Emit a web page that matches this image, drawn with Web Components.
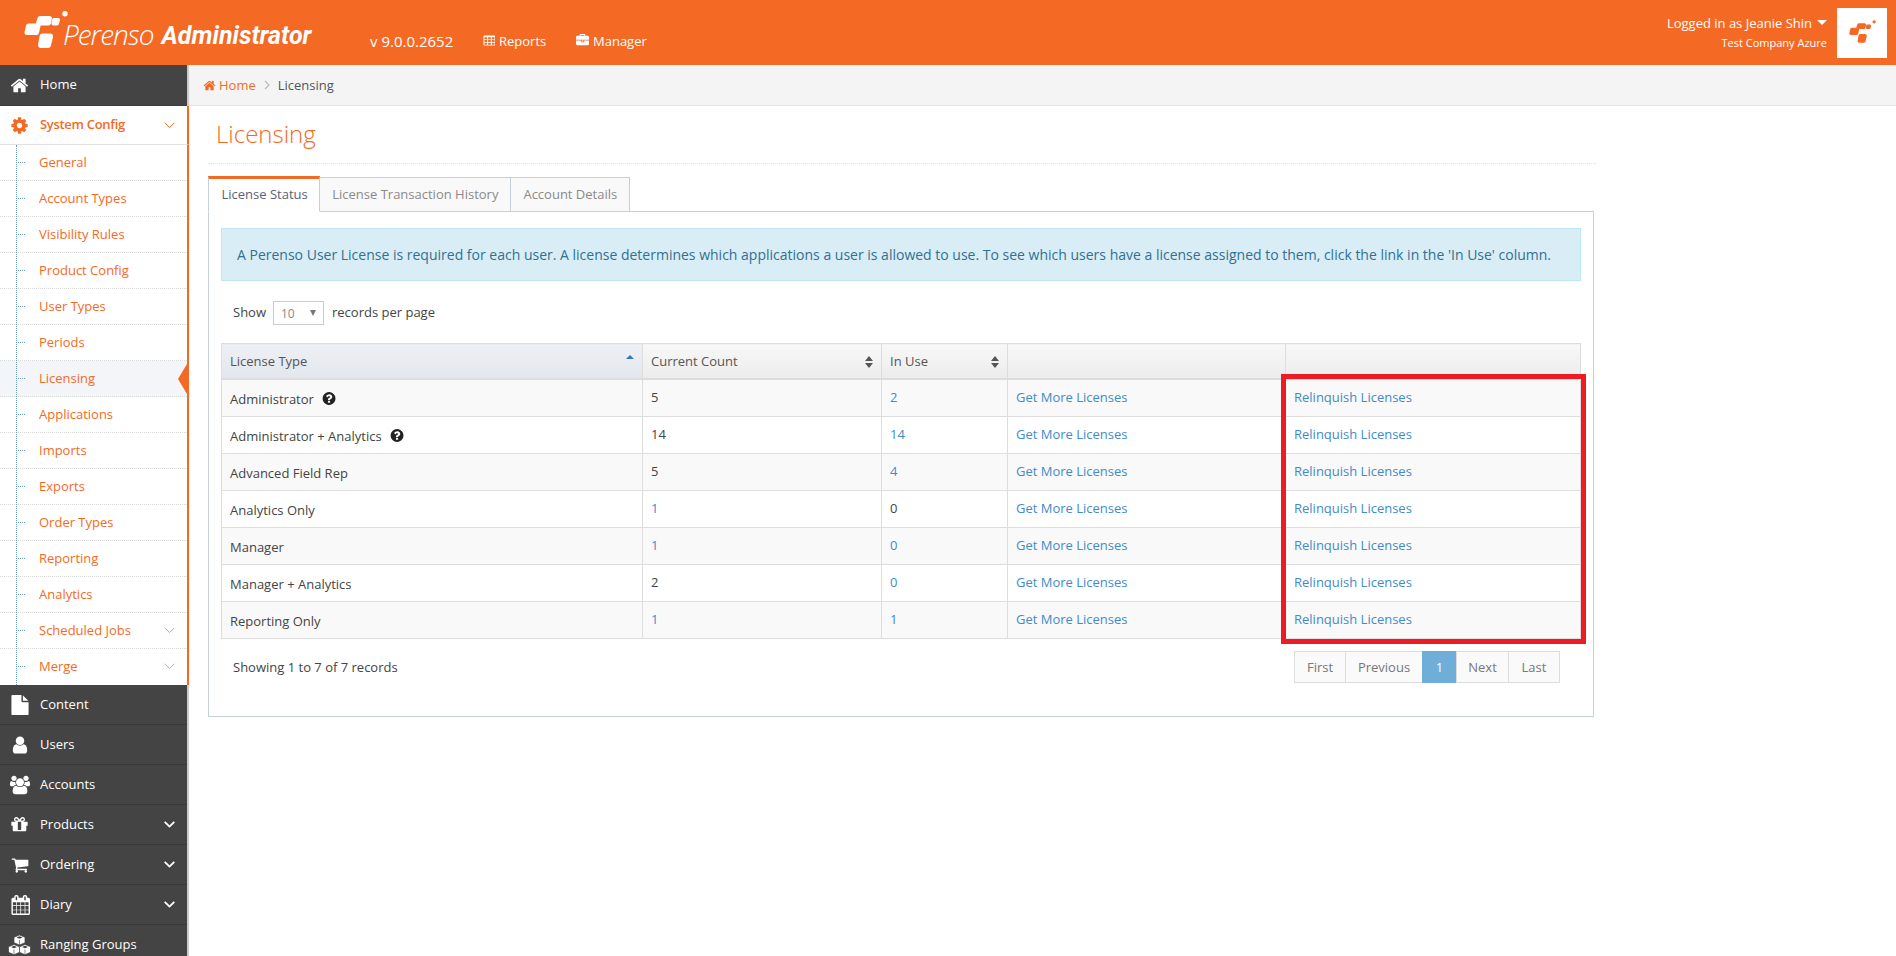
<!DOCTYPE html>
<html>
<head>
<meta charset="utf-8">
<title>Licensing</title>
<style>
  html, body { margin: 0; height: 956px; overflow: hidden; background: #fff; }
  body { font-family: "Open Sans", "Liberation Sans", sans-serif; font-size: 13px; color: #393939; }
</style>
</head>
<body>
<perenso-app>
  <app-header slot="header"></app-header>
  <side-nav slot="nav"></side-nav>
  <bread-crumbs slot="crumbs"></bread-crumbs>
  <license-page slot="page"></license-page>
</perenso-app>

<script>
const ICONS = {
  home: ["0 0 1792 1792", "M1472 992v480q0 26-19 45t-45 19h-384v-384h-256v384h-384q-26 0-45-19t-19-45v-480q0-1 .5-3t.5-3l575-474 575 474q1 2 1 6zm223-69l-62 74q-8 9-21 11h-3q-13 0-21-7l-692-577-692 577q-12 8-24 7-13-2-21-11l-62-74q-8-10-7-23.500t11-21.500l719-599q32-26 76-26t76 26l244 204v-195q0-14 9-23t23-9h192q14 0 23 9t9 23v408l219 182q10 8 11 21.500t-7 23.500z"],
  cog: ["0 0 1792 1792", "M1152 896q0-106-75-181t-181-75-181 75-75 181 75 181 181 75 181-75 75-181zm512-109v222q0 12-8 23t-20 13l-185 28q-19 54-39 91 35 50 107 138 10 12 10 25t-9 23q-27 37-99 108t-94 71q-12 0-26-9l-138-108q-44 23-91 38-16 136-29 186-7 28-36 28h-222q-14 0-24.500-8.500t-11.500-21.500l-28-184q-49-16-90-37l-141 107q-10 9-25 9-14 0-25-11-126-114-165-168-7-10-7-23 0-12 8-23 15-21 51-66.500t54-70.500q-27-50-41-99l-183-27q-13-2-21-12.500t-8-23.500v-222q0-12 8-23t19-13l186-28q14-46 39-92-40-57-107-138-10-12-10-24 0-10 9-23 26-36 98.500-107.500t94.500-71.500q13 0 26 10l138 107q44-23 91-38 16-136 29-186 7-28 36-28h222q14 0 24.500 8.500t11.500 21.500l28 184q49 16 90 37l142-107q9-9 24-9 13 0 25 10 129 119 165 170 7 8 7 22 0 12-8 23-15 21-51 66.500t-54 70.500q26 50 41 98l183 28q13 2 21 12.500t8 23.500z"],
  file: ["0 0 1792 1792", "M1152 512v-472q22 14 36 28l408 408q14 14 28 36h-472zm-128 32q0 40 28 68t68 28h544v1056q0 40-28 68t-68 28h-1344q-40 0-68-28t-28-68v-1600q0-40 28-68t68-28h800v544z"],
  user: ["0 0 1792 1792", "M1536 1399q0 109-62.500 187t-150.500 78h-854q-88 0-150.500-78t-62.500-187q0-85 8.500-160.500t31.500-152 58.500-131 94-89 134.500-34.500q131 128 313 128t313-128q76 0 134.500 34.500t94 89 58.500 131 31.500 152 8.500 160.500zm-256-887q0 159-112.500 271.500t-271.500 112.500-271.500-112.500-112.500-271.500 112.500-271.500 271.500-112.500 271.500 112.500 112.500 271.500z"],
  users: ["0 0 1920 1792", "M593 896q-162 5-265 128h-134q-82 0-138-40.500t-56-118.500q0-353 124-353 6 0 43.500 21t97.500 42.500 119 21.500q67 0 133-23-5 37-5 66 0 139 81 256zm1071 637q0 120-73 189.500t-194 69.500h-874q-121 0-194-69.500t-73-189.500q0-53 3.500-103.500t14-109 26.500-108.500 43-97.500 62-81 85.500-53.500 111.500-20q10 0 43 21.500t73 48 107 48 135 21.500 135-21.500 107-48 73-48 43-21.500q61 0 111.500 20t85.500 53.500 62 81 43 97.500 26.500 108.500 14 109 3.500 103.500zm-1024-1277q0 106-75 181t-181 75-181-75-75-181 75-181 181-75 181 75 75 181zm704 384q0 159-112.500 271.500t-271.500 112.500-271.500-112.500-112.500-271.500 112.500-271.500 271.500-112.500 271.500 112.500 112.500 271.500zm576 225q0 78-56 118.500t-138 40.500h-134q-103-123-265-128 81-117 81-256 0-29-5-66 66 23 133 23 59 0 119-21.500t97.500-42.500 43.500-21q124 0 124 353zm-128-609q0 106-75 181t-181 75-181-75-75-181 75-181 181-75 181 75 75 181z"],
  gift: ["0 0 1792 1792", "M1056 1356v-716h-320v716q0 25 18 38.500t46 13.500h192q28 0 46-13.500t18-38.500zm-456-844h195l-126-161q-26-31-69-31-40 0-68 28t-28 68 28 68 68 28zm688-96q0-40-28-68t-68-28q-43 0-69 31l-125 161h194q40 0 68-28t28-68zm376 256v320q0 14-9 23t-23 9h-96v416q0 40-28 68t-68 28h-1088q-40 0-68-28t-28-68v-416h-96q-14 0-23-9t-9-23v-320q0-14 9-23t23-9h440q-93 0-158.500-65.500t-65.500-158.500 65.500-158.500 158.500-65.500q107 0 168 77l128 165 128-165q61-77 168-77 93 0 158.500 65.500t65.500 158.500-65.500 158.500-158.500 65.500h440q14 0 23 9t9 23z"],
  cart: ["0 0 1792 1792", "M704 1536q0 52-38 90t-90 38-90-38-38-90 38-90 90-38 90 38 38 90zm896 0q0 52-38 90t-90 38-90-38-38-90 38-90 90-38 90 38 38 90zm128-1088v512q0 24-16.500 42.500t-40.500 21.500l-1044 122q13 60 13 70 0 16-24 64h920q26 0 45 19t19 45-19 45-45 19h-1024q-26 0-45-19t-19-45q0-11 8-31.500t16-36 21.500-40 15.500-29.500l-177-823h-204q-26 0-45-19t-19-45 19-45 45-19h256q16 0 28.500 6.500t19.500 15.500 13 24.500 8 26 5.500 29.500 4.500 26h1201q26 0 45 19t19 45z"],
  calendar: ["0 0 1664 1792", "M192 1664h288v-288h-288v288zm352 0h320v-288h-320v288zm-352-352h288v-320h-288v320zm352 0h320v-320h-320v320zm-352-384h288v-288h-288v288zm736 736h320v-288h-320v288zm-384-736h320v-288h-320v288zm768 736h288v-288h-288v288zm-384-352h320v-320h-320v320zm-352-864v-288q0-13-9.500-22.500t-22.500-9.500h-64q-13 0-22.500 9.500t-9.500 22.500v288q0 13 9.500 22.500t22.500 9.500h64q13 0 22.500-9.500t9.500-22.500zm736 864h288v-320h-288v320zm-384-384h320v-288h-320v288zm384 0h288v-288h-288v288zm32-480v-288q0-13-9.500-22.500t-22.500-9.500h-64q-13 0-22.500 9.500t-9.500 22.500v288q0 13 9.500 22.500t22.500 9.500h64q13 0 22.500-9.500t9.500-22.500zm384-64v1280q0 52-38 90t-90 38h-1408q-52 0-90-38t-38-90v-1280q0-52 38-90t90-38h128v-96q0-66 47-113t113-47h64q66 0 113 47t47 113v96h384v-96q0-66 47-113t113-47h64q66 0 113 47t47 113v96h128q52 0 90 38t38 90z"],
  table: ["0 128 1664 1536", "M576 1376v-192q0-14-9-23t-23-9h-320q-14 0-23 9t-9 23v192q0 14 9 23t23 9h320q14 0 23-9t9-23zm0-384v-192q0-14-9-23t-23-9h-320q-14 0-23 9t-9 23v192q0 14 9 23t23 9h320q14 0 23-9t9-23zm512 384v-192q0-14-9-23t-23-9h-320q-14 0-23 9t-9 23v192q0 14 9 23t23 9h320q14 0 23-9t9-23zm-512-768v-192q0-14-9-23t-23-9h-320q-14 0-23 9t-9 23v192q0 14 9 23t23 9h320q14 0 23-9t9-23zm512 384v-192q0-14-9-23t-23-9h-320q-14 0-23 9t-9 23v192q0 14 9 23t23 9h320q14 0 23-9t9-23zm512 384v-192q0-14-9-23t-23-9h-320q-14 0-23 9t-9 23v192q0 14 9 23t23 9h320q14 0 23-9t9-23zm-512-768v-192q0-14-9-23t-23-9h-320q-14 0-23 9t-9 23v192q0 14 9 23t23 9h320q14 0 23-9t9-23zm512 384v-192q0-14-9-23t-23-9h-320q-14 0-23 9t-9 23v192q0 14 9 23t23 9h320q14 0 23-9t9-23zm0-384v-192q0-14-9-23t-23-9h-320q-14 0-23 9t-9 23v192q0 14 9 23t23 9h320q14 0 23-9t9-23zm128-320v1088q0 66-47 113t-113 47h-1344q-66 0-113-47t-47-113v-1088q0-66 47-113t113-47h1344q66 0 113 47t47 113z"],
  briefcase: ["0 0 1792 1792", "M640 256h512v-128h-512v128zm1152 640v480q0 66-47 113t-113 47h-1472q-66 0-113-47t-47-113v-480h672v160q0 26 19 45t45 19h320q26 0 45-19t19-45v-160h672zm-768 0v128h-256v-128h256zm768-480v384h-1792v-384q0-66 47-113t113-47h352v-160q0-40 28-68t68-28h576q40 0 68 28t28 68v160h352q66 0 113 47t47 113z"],
  help: ["0 0 1664 1792", "M1024 1376v-192q0-14-9-23t-23-9h-192q-14 0-23 9t-9 23v192q0 14 9 23t23 9h192q14 0 23-9t9-23zm256-672q0-88-55.500-163t-138.500-116-170-41q-243 0-371 213-15 24 8 42l132 100q7 6 19 6 16 0 25-12 53-68 86-92 34-24 86-24 48 0 85.500 26t37.500 59q0 38-20 61t-68 45q-63 28-115.500 86.500t-52.500 125.500v36q0 14 9 23t23 9h192q14 0 23-9t9-23q0-19 21.500-49.500t54.500-49.500q32-18 49-28.500t46-35 44.500-48 28-60.500 12.500-81zm384 192q0 209-103 385.500t-279.500 279.500-385.500 103-385.500-103-279.500-279.500-103-385.500 103-385.500 279.500-279.500 385.500-103 385.500 103 279.500 279.500 103 385.500z"]
};

function icon(name, size) {
  const [box, d] = ICONS[name];
  return `<svg viewBox="${box}" width="${size}" height="${size}" fill="currentColor" aria-hidden="true"><path d="${d}"/></svg>`;
}

// three stacked cubes, drawn by hand: white sides, dark seams
const cubes = `<svg viewBox="0 0 23 20" width="23" height="20" aria-hidden="true">
  <g fill="#fff" stroke="#444" stroke-width=".7" stroke-linejoin="round">
    <path d="M11.500 0l5.500 2.300v5.400l-5.500 2.400L6 7.700V2.300z"/>
    <path d="M6 9.500l5.500 2.300v5.500L6 19.700.5 17.300v-5.500z"/>
    <path d="M17 9.500l5.500 2.300v5.500L17 19.700l-5.500-2.400v-5.500z"/>
  </g>
  <g fill="#444">
    <path d="M11.500 1.300l3 1.200-3 1.300-3-1.300zM6 10.800l3 1.200-3 1.300L3 12zM17 10.800l3 1.200-3 1.300-3-1.300z"/>
    <path d="M11.200 5h.6v5h-.6zM5.700 14.500h.6v5h-.6zM16.700 14.500h.6v5h-.6z"/>
  </g>
</svg>`;

function chevron(weight) {
  return `<svg viewBox="0 0 11 7" width="11" height="7" fill="none" stroke="currentColor" stroke-width="${weight}"><path d="M.7 .8l4.800 4.800 4.800-4.800"/></svg>`;
}

// the Perenso mark: joined blobs, a small blob and a dot
function logoMark(w, h, color) {
  return `<svg viewBox="0 0 44 37" width="${w}" height="${h}" aria-hidden="true">
    <g fill="${color}" stroke="${color}" stroke-linejoin="round">
      <polygon stroke-width="5" points="16,7.500 25.500,7.500 24.500,12 14.500,12"/>
      <polygon stroke-width="5" points="4.500,15 14,15 12.500,21.500 3,21.500"/>
      <polygon stroke-width="6" points="18.500,25.500 26,25.500 24,34 17,34"/>
      <polygon stroke-width="4" points="30,9 34,9 33,12.500 29.500,12.500"/>
    </g>
    <circle cx="41" cy="2.700" r="2.700" fill="${color}"/>
  </svg>`;
}

class PerensoApp extends HTMLElement {
  constructor() {
    super();
    this.attachShadow({ mode: "open" }).innerHTML = `
      <style>
        :host { display: grid; grid-template: 65px 1fr / 189px 1fr; height: 956px; overflow: hidden; }
        .top { grid-column: 1 / 3; }
        .side { overflow: hidden; }
        main { min-width: 0; }
      </style>
      <div class="top"><slot name="header"></slot></div>
      <div class="side"><slot name="nav"></slot></div>
      <main><slot name="crumbs"></slot><slot name="page"></slot></main>
    `;
  }
}

class AppHeader extends HTMLElement {
  connectedCallback() {
    this.attachShadow({ mode: "open" }).innerHTML = `
      <style>
        :host { display: flex; align-items: center; height: 65px; background: #f46a25; color: #fff; }
        .brand { display: flex; align-items: center; margin-left: 24px; width: 346px; height: 65px; }
        .brand svg { margin-right: -5px; margin-top: -6px; flex: none; }
        .word { font-size: 28px; font-weight: 300; font-style: italic; letter-spacing: -1px; margin-top: 3px; }
        .admin { font-family: "Liberation Sans Narrow", "Roboto", sans-serif; font-size: 25px; font-weight: 700; font-style: italic; margin-left: 8px; margin-top: 5px; }
        .ver { font-size: 15px; width: 113px; margin-top: 16px; }
        a { display: flex; align-items: center; gap: 4px; font-size: 13px; margin-top: 16px; }
        .reports { width: 93px; }
        .user { margin-left: auto; text-align: right; margin-right: 10px; }
        .name { font-size: 13px; line-height: 18px; display: flex; align-items: center; justify-content: flex-end; gap: 5px; margin-top: -1px; }
        .caret { width: 0; height: 0; border: 5px solid transparent; border-top: 5px solid #fff; border-bottom: 0; }
        .co { font-size: 11px; font-weight: 500; line-height: 16px; margin-top: 3px; }
        .box { width: 50px; height: 50px; background: #fff; margin-right: 9px; display: flex; align-items: center; justify-content: center; }
        .box svg { margin-top: -3px; }
      </style>
      <div class="brand">${logoMark(44, 37, "#fff")}<span class="word">Perenso</span><span class="admin">Administrator</span></div>
      <span class="ver">v 9.0.0.2652</span>
      <a class="reports">${icon("table", 12)}Reports</a>
      <a>${icon("briefcase", 13)}Manager</a>
      <div class="user">
        <div class="name">Logged in as Jeanie Shin <span class="caret"></span></div>
        <div class="co">Test Company Azure</div>
      </div>
      <div class="box">${logoMark(27, 23, "#f46a25")}</div>
    `;
  }
}

class NavItem extends HTMLElement {
  connectedCallback() {
    const ic = this.getAttribute("icon");
    const size = +this.getAttribute("size") || 20;
    this.attachShadow({ mode: "open" }).innerHTML = `
      <style>
        :host { display: flex; align-items: center; height: 39px; padding-right: 12px; background: #444; color: #fff; border-bottom: 1px solid #3a3a3a; font-size: 13px; }
        :host([open]) { background: #fff; color: #f46a25; font-weight: 600; letter-spacing: -.3px; border-bottom: 1px solid #e1e1e1; }
        .ic { width: 40px; flex: none; display: flex; justify-content: center; padding-right: 1px; box-sizing: border-box; }
        .tx { flex: 1; margin-bottom: 2px; }
        svg { display: block; }
      </style>
      <span class="ic">${ic === "cubes" ? cubes : icon(ic, size)}</span>
      <span class="tx"><slot></slot></span>
      ${this.hasAttribute("more") ? chevron(this.hasAttribute("open") ? 1 : 1.8) : ""}
    `;
  }
}

class NavSub extends HTMLElement {
  connectedCallback() {
    this.attachShadow({ mode: "open" }).innerHTML = `
      <style>
        :host { display: flex; align-items: center; height: 35px; padding-right: 12px; position: relative; background: #fff; color: #f46a25; font-size: 13px; border-bottom: 1px dotted #d8d8d8; }
        :host([current]) { background: #f3f5f9; }
        :host(:last-of-type) { border-bottom: 1px solid #fff; }
        .tick { width: 7px; margin-left: 18px; margin-right: 14px; border-top: 1px dotted #6d9cc5; flex: none; }
        .tx { flex: 1; margin-bottom: 2px; }
        .arrow { display: none; position: absolute; right: 0; top: 3px; width: 0; height: 0; border: 15px solid transparent; border-right: 9px solid #f46a25; border-left: 0; }
        :host([current]) .arrow { display: block; }
        svg { color: #f7956a; }
      </style>
      <span class="tick"></span>
      <span class="tx"><slot></slot></span>
      ${this.hasAttribute("more") ? chevron(1) : ""}
      <span class="arrow"></span>
    `;
  }
}

class SideNav extends HTMLElement {
  connectedCallback() {
    const subs = ["General", "Account Types", "Visibility Rules", "Product Config", "User Types", "Periods", "Licensing", "Applications", "Imports", "Exports", "Order Types", "Reporting", "Analytics", "Scheduled Jobs", "Merge"];
    this.attachShadow({ mode: "open" }).innerHTML = `
      <style>
        :host { display: block; background: #444; border-right: 2px solid #ccc; width: 187px; height: 891px; }
        .tree { position: relative; border-right: 2px solid #f46a25; margin-right: -2px; }
        .tree::before { content: ""; position: absolute; left: 16px; top: 0; bottom: 0; border-left: 1px dotted #6d9cc5; z-index: 1; }
      </style>
      <nav-item icon="home" size="19" style="height:40px">Home</nav-item>
      <nav-item icon="cog" size="19" open more style="height:38px; border-right:2px solid #f46a25; margin-right:-2px">System Config</nav-item>
      <div class="tree">
        ${subs.map(s => `<nav-sub${s === "Licensing" ? " current" : ""}${s === "Scheduled Jobs" || s === "Merge" ? " more" : ""}>${s}</nav-sub>`).join("")}
      </div>
      <nav-item icon="file" size="20">Content</nav-item>
      <nav-item icon="user" size="20">Users</nav-item>
      <nav-item icon="users" size="20">Accounts</nav-item>
      <nav-item icon="gift" size="19" more>Products</nav-item>
      <nav-item icon="cart" size="18" more>Ordering</nav-item>
      <nav-item icon="calendar" size="20" more>Diary</nav-item>
      <nav-item icon="cubes">Ranging Groups</nav-item>
    `;
  }
}

class BreadCrumbs extends HTMLElement {
  connectedCallback() {
    this.attachShadow({ mode: "open" }).innerHTML = `
      <style>
        :host { display: flex; align-items: center; height: 41px; box-sizing: border-box; padding-left: 14px; background: #f4f4f4; border-bottom: 1px solid #e5e5e5; font-size: 13px; color: #555; }
        a { color: #f46a25; display: flex; align-items: center; gap: 3px; }
        .sep { margin: 0 8px 0 8px; color: #bbb; }
      </style>
      <a>${icon("home", 13)}Home</a>
      <svg class="sep" viewBox="0 0 6 10" width="6" height="10" fill="none" stroke="currentColor" stroke-width="1.2"><path d="M1 1l4 4-4 4"/></svg>
      <span>Licensing</span>
    `;
  }
}

class TabStrip extends HTMLElement {
  connectedCallback() {
    this.attachShadow({ mode: "open" }).innerHTML = `
      <style>
        :host { display: flex; height: 36px; align-items: flex-end; font-size: 13px; position: relative; z-index: 1; margin-bottom: -1px; }
        span { box-sizing: border-box; height: 35px; padding: 0 12px 2px; display: flex; align-items: center; color: #8a8a8a; background: #f9f9f9; border: 1px solid #c5d0dc; border-left: 0; }
        .on { height: 36px; padding: 0 11.500px 2px 12.500px; color: #576373; background: #fff; border: 1px solid #c5d0dc; border-top: 3px solid #f46a25; border-bottom: 1px solid #fff; }
      </style>
      <span class="on">License Status</span><span>License Transaction History</span><span>Account Details</span>
    `;
  }
}

class LicenseTable extends HTMLElement {
  connectedCallback() {
    const rows = [
      ["Administrator", true, "5", "2", false, true],
      ["Administrator + Analytics", true, "14", "14", false, true],
      ["Advanced Field Rep", false, "5", "4", false, true],
      ["Analytics Only", false, "1", "0", true, false],
      ["Manager", false, "1", "0", true, true],
      ["Manager + Analytics", false, "2", "0", false, true],
      ["Reporting Only", false, "1", "1", true, true]
    ];
    const sort = `<svg class="sort" viewBox="0 0 8 12" width="8" height="12" fill="#555"><path d="M4 0l4 5H0zM4 12L0 7h8z"/></svg>`;
    this.attachShadow({ mode: "open" }).innerHTML = `
      <style>
        :host { display: block; position: relative; }
        table { border-collapse: collapse; width: 1360px; table-layout: fixed; font-size: 13px; color: #444; }
        th, td { border: 1px solid #ddd; padding: 0 8px; height: 36px; box-sizing: content-box; text-align: left; font-weight: 400; }
        th { height: 34px; border-bottom: 2px solid #ddd; background: linear-gradient(#f8f8f8, #ececec); color: #555; position: relative; }
        th:first-child { background: linear-gradient(#eef0f5, #e3e6ec); }
        tbody tr:nth-child(odd) td { background: #f9f9f9; }
        td { padding-bottom: 2px; height: 34px; }
        td:first-child { padding-top: 1px; padding-bottom: 0; height: 35px; }
        a { color: #428bca; }
        .sort { position: absolute; right: 8px; top: 12px; }
        .up { position: absolute; right: 8px; top: 11px; border: 4px solid transparent; border-bottom: 4px solid #337ab7; border-top: 0; }
        .q { display: inline-block; vertical-align: -2px; margin-left: 7px; color: #222; }
        .q svg { display: block; }
        .mark { position: absolute; left: 1060px; top: 31px; width: 295px; height: 260px; border: 5px solid #ed1c24; }
      </style>
      <table>
        <colgroup><col style="width:421px"><col style="width:239px"><col style="width:126px"><col style="width:278px"><col></colgroup>
        <thead><tr><th>License Type<i class="up"></i></th><th>Current Count${sort}</th><th>In Use${sort}</th><th></th><th></th></tr></thead>
        <tbody>
          ${rows.map(r => `<tr>
            <td>${r[0]}${r[1] ? `<span class="q">${icon("help", 15)}</span>` : ""}</td>
            <td>${r[4] ? `<a>${r[2]}</a>` : r[2]}</td>
            <td>${r[5] ? `<a>${r[3]}</a>` : r[3]}</td>
            <td><a>Get More Licenses</a></td>
            <td><a>Relinquish Licenses</a></td>
          </tr>`).join("")}
        </tbody>
      </table>
      <div class="mark"></div>
    `;
  }
}

class PagerBar extends HTMLElement {
  connectedCallback() {
    const pages = [["First", 52], ["Previous", 78], ["1", 35], ["Next", 53], ["Last", 52]];
    this.attachShadow({ mode: "open" }).innerHTML = `
      <style>
        :host { display: flex; align-items: center; justify-content: space-between; margin-top: 12px; padding: 0 21px 0 12px; font-size: 13px; color: #444; }
        div { display: flex; }
        span { box-sizing: border-box; height: 32px; display: flex; align-items: center; justify-content: center; background: #fafafa; border: 1px solid #ddd; margin-left: -1px; color: #777; }
        .on { background: #6faed9; border-color: #6faed9; color: #fff; }
      </style>
      <p style="margin:0">Showing 1 to 7 of 7 records</p>
      <div>${pages.map(([t, w]) => `<span${t === "1" ? ' class="on"' : ""} style="width:${w}px">${t}</span>`).join("")}</div>
    `;
  }
}

class LicensePage extends HTMLElement {
  connectedCallback() {
    this.attachShadow({ mode: "open" }).innerHTML = `
      <style>
        :host { display: block; width: 1388px; margin-left: 19px; }
        h1 { margin: 0; padding: 13px 8px 0; height: 44px; font-size: 24px; line-height: 30px; font-weight: 300; color: #f46a25; border-bottom: 1px dotted #e2e2e2; }
        .gap { height: 12px; }
        .panel { box-sizing: border-box; width: 1386px; height: 506px; border: 1px solid #c5d0dc; padding: 16px 12px 0; }
        .note { box-sizing: border-box; height: 53px; width: 1360px; display: flex; align-items: center; padding: 0 15px; background: #d9edf7; border: 1px solid #bce8f1; color: #31708f; font-size: 14px; white-space: nowrap; }
        .size { display: flex; align-items: center; height: 22px; margin: 20px 0 20px 12px; font-size: 13px; color: #444; }
        .sel { box-sizing: border-box; width: 51px; height: 24px; margin: 2px 8px 0 7px; border: 1px solid #ccc; display: flex; align-items: center; justify-content: space-between; padding: 0 7px; color: #888; font-size: 12px; }
        .sel i { border: 3px solid transparent; border-top: 6px solid #777; border-bottom: 0; }
      </style>
      <h1>Licensing</h1>
      <div class="gap"></div>
      <tab-strip></tab-strip>
      <div class="panel">
        <div class="note">A Perenso User License is required for each user. A license determines which applications a user is allowed to use. To see which users have a license assigned to them, click the link in the 'In Use' column.</div>
        <div class="size">Show <span class="sel">10<i></i></span> records per page</div>
        <license-table></license-table>
        <pager-bar></pager-bar>
      </div>
    `;
  }
}

customElements.define("perenso-app", PerensoApp);
customElements.define("app-header", AppHeader);
customElements.define("nav-item", NavItem);
customElements.define("nav-sub", NavSub);
customElements.define("side-nav", SideNav);
customElements.define("bread-crumbs", BreadCrumbs);
customElements.define("tab-strip", TabStrip);
customElements.define("license-table", LicenseTable);
customElements.define("pager-bar", PagerBar);
customElements.define("license-page", LicensePage);
</script>
</body>
</html>
